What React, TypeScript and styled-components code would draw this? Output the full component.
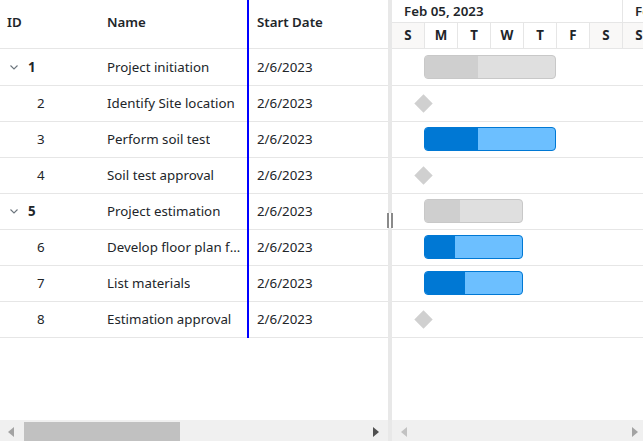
import React from "react";
import styled, { createGlobalStyle } from "styled-components";

const Global = createGlobalStyle`
  html, body { margin: 0; padding: 0; background: #fff; }
  body { font-family: "Noto Sans", "Open Sans", sans-serif; color: #212529; overflow: hidden; }
`;

type Task = {
  id: number;
  name: string;
  parent?: boolean;
  milestone?: boolean;
  start: number; // days from chart start
  days: number;
  progress: number; // px width of progress
};

const tasks: Task[] = [
  { id: 1, name: "Project initiation", parent: true, start: 1, days: 4, progress: 53 },
  { id: 2, name: "Identify Site location", milestone: true, start: 1, days: 0, progress: 0 },
  { id: 3, name: "Perform soil test", start: 1, days: 4, progress: 53 },
  { id: 4, name: "Soil test approval", milestone: true, start: 1, days: 0, progress: 0 },
  { id: 5, name: "Project estimation", parent: true, start: 1, days: 3, progress: 35 },
  { id: 6, name: "Develop floor plan for estimation", start: 1, days: 3, progress: 30 },
  { id: 7, name: "List materials", start: 1, days: 3, progress: 40 },
  { id: 8, name: "Estimation approval", milestone: true, start: 1, days: 0, progress: 0 },
];

const DAY = 33;
const days = ["S", "M", "T", "W", "T", "F", "S", "S"];
const TEXT = "13.3px";

const Page = styled.div`
  width: 643px;
  height: 441px;
  display: flex;
  flex-direction: row;
  overflow: hidden;
`;

const GridPane = styled.div`
  width: 388px;
  display: flex;
  flex-direction: column;
  flex-shrink: 0;
`;

const GridBody = styled.div`
  flex: 1;
  display: flex;
  align-items: flex-start;
  overflow: hidden;
`;

const Frozen = styled.div`
  width: 247px;
  border-right: 2px solid #0000ff;
  flex-shrink: 0;
`;

const Movable = styled.div`
  flex: 1;
`;

const HeaderRow = styled.div<{ $cols: string }>`
  display: grid;
  grid-template-columns: ${(p) => p.$cols};
  height: 48px;
  border-bottom: 1px solid #e6e6e6;
  margin-bottom: 1px;
  align-items: center;
`;

const HeaderCell = styled.div<{ $pl: number }>`
  padding-left: ${(p) => p.$pl}px;
  padding-bottom: 4px;
  font-size: ${TEXT};
  font-weight: 600;
  color: #212529;
  white-space: nowrap;
`;

const Row = styled.div<{ $cols: string }>`
  display: grid;
  grid-template-columns: ${(p) => p.$cols};
  height: 35px;
  border-bottom: 1px solid #e6e6e6;
  align-items: center;
`;

const Cell = styled.div<{ $pl: number }>`
  padding-left: ${(p) => p.$pl}px;
  padding-right: 6px;
  padding-bottom: 1px;
  font-size: ${TEXT};
  color: #212529;
  white-space: nowrap;
  overflow: hidden;
  text-overflow: ellipsis;
  display: flex;
  align-items: center;
`;

const NameText = styled.span`
  overflow: hidden;
  text-overflow: ellipsis;
  white-space: nowrap;
`;

const Chevron = styled.span`
  display: inline-flex;
  width: 8px;
  margin-left: 10px;
  margin-right: 10px;
`;

const IdText = styled.span<{ $bold?: boolean; $indent: number }>`
  font-weight: ${(p) => (p.$bold ? 700 : 400)};
  margin-left: ${(p) => p.$indent}px;
`;

const Scrollbar = styled.div`
  height: 21px;
  background: #f0f0f0;
  display: flex;
  align-items: flex-end;
  position: relative;
  flex-shrink: 0;
`;

const Arrow = styled.span<{ $dir: "l" | "r"; $color: string; $x: string }>`
  position: absolute;
  top: 7px;
  ${(p) => p.$x};
  width: 0;
  height: 0;
  border-top: 5px solid transparent;
  border-bottom: 5px solid transparent;
  ${(p) =>
    p.$dir === "l"
      ? `border-right: 6px solid ${p.$color};`
      : `border-left: 6px solid ${p.$color};`}
`;

const Thumb = styled.div`
  margin-left: 24px;
  width: 156px;
  height: 19px;
  background: #c1c1c1;
`;

const Splitter = styled.div`
  width: 4px;
  flex-shrink: 0;
  background: #e8e8e8;
  position: relative;
`;

const Handle = styled.div`
  position: absolute;
  top: 213px;
  left: -2px;
  width: 8px;
  height: 15px;
  background: #fff;
  display: flex;
  justify-content: center;
  gap: 2px;
  & > span {
    width: 2px;
    height: 100%;
    background: #8a8a8a;
  }
`;

const ChartPane = styled.div`
  flex: 1;
  display: flex;
  flex-direction: column;
  overflow: hidden;
`;

const ChartBody = styled.div`
  flex: 1;
  overflow: hidden;
`;

const TopTier = styled.div`
  display: flex;
  height: 22px;
  border-bottom: 1px solid #e6e6e6;
`;

const WeekCell = styled.div<{ $w: number }>`
  width: ${(p) => p.$w}px;
  flex-shrink: 0;
  box-sizing: border-box;
  border-right: 1px solid #e6e6e6;
  padding-left: 12px;
  font-size: ${TEXT};
  font-weight: 600;
  line-height: 22px;
  white-space: nowrap;
  overflow: hidden;
`;

const BottomTier = styled.div`
  display: flex;
  height: 25px;
  border-bottom: 1px solid #e6e6e6;
  margin-bottom: 1px;
`;

const DayCell = styled.div<{ $weekend: boolean }>`
  width: ${DAY}px;
  flex-shrink: 0;
  box-sizing: border-box;
  border-right: 1px solid #e6e6e6;
  background: ${(p) => (p.$weekend ? "#f9f8f7" : "#fff")};
  font-size: ${TEXT};
  font-weight: 700;
  text-align: center;
  line-height: 25px;
`;

const ChartRow = styled.div`
  height: 35px;
  border-bottom: 1px solid #e6e6e6;
  position: relative;
`;

const Bar = styled.div<{ $parent: boolean }>`
  position: absolute;
  top: 5px;
  height: 24px;
  box-sizing: border-box;
  border-radius: 4px;
  overflow: hidden;
  border: 1px solid ${(p) => (p.$parent ? "#c8c8c8" : "#0078d4")};
  background: ${(p) => (p.$parent ? "#dfdfdf" : "#6cbfff")};
`;

const Progress = styled.div<{ $parent: boolean }>`
  height: 100%;
  background: ${(p) => (p.$parent ? "#cfcfcf" : "#0078d4")};
`;

const Milestone = styled.div`
  position: absolute;
  top: 11px;
  width: 13px;
  height: 13px;
  background: #d0d0d0;
  transform: rotate(45deg);
`;

const FROZEN_COLS = "100px 147px";

const ChevronIcon = () => (
  <svg width="8" height="5" viewBox="0 0 8 5">
    <path d="M0.5 0.5 L4 4 L7.5 0.5" fill="none" stroke="#6c757d" strokeWidth="1.1" />
  </svg>
);

export default function App() {
  return (
    <>
      <Global />
      <Page>
        <GridPane>
          <GridBody>
            <Frozen>
              <HeaderRow $cols={FROZEN_COLS}>
                <HeaderCell $pl={7}>ID</HeaderCell>
                <HeaderCell $pl={7}>Name</HeaderCell>
              </HeaderRow>
              {tasks.map((t) => (
                <Row key={t.id} $cols={FROZEN_COLS}>
                  <Cell $pl={0}>
                    {t.parent ? (
                      <>
                        <Chevron>
                          <ChevronIcon />
                        </Chevron>
                        <IdText $bold $indent={0}>
                          {t.id}
                        </IdText>
                      </>
                    ) : (
                      <IdText $indent={37}>{t.id}</IdText>
                    )}
                  </Cell>
                  <Cell $pl={7}>
                    <NameText>{t.name}</NameText>
                  </Cell>
                </Row>
              ))}
            </Frozen>
            <Movable>
              <HeaderRow $cols="1fr">
                <HeaderCell $pl={8}>Start Date</HeaderCell>
              </HeaderRow>
              {tasks.map((t) => (
                <Row key={t.id} $cols="1fr">
                  <Cell $pl={8}>2/6/2023</Cell>
                </Row>
              ))}
            </Movable>
          </GridBody>
          <Scrollbar>
            <Arrow $dir="l" $color="#a3a3a3" $x="left: 8px" />
            <Thumb />
            <Arrow $dir="r" $color="#505050" $x="left: 373px" />
          </Scrollbar>
        </GridPane>
        <Splitter>
          <Handle>
            <span />
            <span />
          </Handle>
        </Splitter>
        <ChartPane>
          <ChartBody>
            <TopTier>
              <WeekCell $w={DAY * 7}>Feb 05, 2023</WeekCell>
              <WeekCell $w={DAY * 7}>Feb 12, 2023</WeekCell>
            </TopTier>
            <BottomTier>
              {days.map((d, i) => (
                <DayCell key={i} $weekend={d === "S"}>
                  {d}
                </DayCell>
              ))}
            </BottomTier>
            {tasks.map((t) => (
              <ChartRow key={t.id}>
                {t.milestone ? (
                  <Milestone style={{ left: t.start * DAY - 8.5 }} />
                ) : (
                  <Bar
                    $parent={!!t.parent}
                    style={{ left: t.start * DAY - 1, width: t.days * DAY }}
                  >
                    <Progress $parent={!!t.parent} style={{ width: t.progress }} />
                  </Bar>
                )}
              </ChartRow>
            ))}
          </ChartBody>
          <Scrollbar>
            <Arrow $dir="l" $color="#c2c2c2" $x="left: 9px" />
            <Arrow $dir="r" $color="#a3a3a3" $x="right: 5px" />
          </Scrollbar>
        </ChartPane>
      </Page>
    </>
  );
}
